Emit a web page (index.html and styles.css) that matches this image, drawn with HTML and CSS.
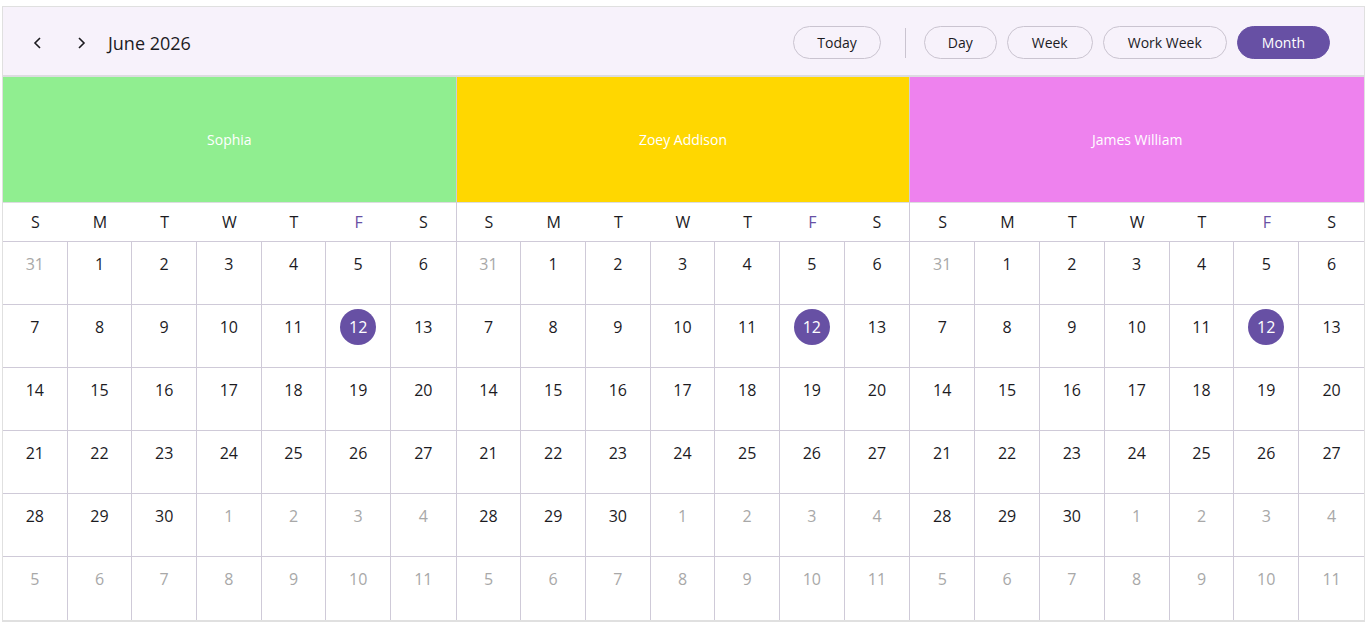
FILE: index.html
```html
<!DOCTYPE html>
<html lang="en">

<head>
    <meta charset="UTF-8">
    <title>Scheduler - Month</title>
    <link rel="stylesheet" href="styles.css">
</head>

<body>

    <div class="scheduler">
        <div class="toolbar">
            <div class="nav">
                <button class="arrow" title="Previous">
                    <svg width="14" height="14" viewBox="0 0 14 14"><path d="M9 2 L4 7 L9 12" fill="none" stroke="#1c1b1f" stroke-width="1.6" /></svg>
                </button>
                <button class="arrow" title="Next">
                    <svg width="14" height="14" viewBox="0 0 14 14"><path d="M5 2 L10 7 L5 12" fill="none" stroke="#1c1b1f" stroke-width="1.6" /></svg>
                </button>
                <span class="title">June 2026</span>
            </div>
            <div class="views">
                <button class="pill today">Today</button>
                <span class="divider"></span>
                <button class="pill day">Day</button>
                <button class="pill week">Week</button>
                <button class="pill workweek">Work Week</button>
                <button class="pill month active">Month</button>
            </div>
        </div>

        <div class="resources" id="resources">
        </div>
    </div>

    <script>
        const resources = [
            { name: "Sophia", color: "#90ee90" },
            { name: "Zoey Addison", color: "#ffd700" },
            { name: "James William", color: "#ee82ee" }
        ];
        const dayNames = ["S", "M", "T", "W", "T", "F", "S"];
        const container = document.querySelector("#resources");

        // June 2026 starts on a Monday, grid starts Sunday 31 May
        function buildDates() {
            let dates = [{ n: 31, other: true }];
            for (let i = 1; i <= 30; i++) {
                dates.push({ n: i, other: false, today: i === 12 });
            }
            for (let i = 1; dates.length < 42; i++) {
                dates.push({ n: i, other: true });
            }
            return dates;
        }

        const dates = buildDates();

        for (let r = 0; r < resources.length; r++) {
            let html = `<div class="resource">
                <div class="resource-head" style="background:${resources[r].color}">${resources[r].name}</div>
                <div class="day-names">`;
            for (let d = 0; d < 7; d++) {
                html += `<span class="${d === 5 ? 'fri' : ''}">${dayNames[d]}</span>`;
            }
            html += `</div><div class="cells">`;
            for (let i = 0; i < dates.length; i++) {
                let cls = "num";
                if (dates[i].other) cls += " other";
                if (dates[i].today) cls += " today";
                html += `<div class="cell"><span class="${cls}">${dates[i].n}</span></div>`;
            }
            html += `</div></div>`;
            container.innerHTML += html;
        }
    </script>

</body>

</html>
```

FILE: styles.css
```css
body {
    margin: 0;
    font-family: "Open Sans", "Noto Sans", sans-serif;
    color: #1c1b1f;
    background: #fff;
}

.scheduler {
    margin: 6px 2px 0 2px;
    border: 1px solid #e0e0e0;
    border-bottom: 2px solid #e0e0e0;
}

.toolbar {
    height: 70px;
    box-sizing: border-box;
    display: flex;
    justify-content: space-between;
    align-items: center;
    background: #f7f2fb;
    border-bottom: 2px solid #dcdce0;
    padding: 3px 34px 0 21px;
}

.nav {
    display: flex;
    align-items: center;
}

.arrow {
    width: 28px;
    height: 28px;
    margin-right: 15px;
    padding: 0;
    border: none;
    background: none;
    display: flex;
    align-items: center;
    justify-content: center;
    cursor: pointer;
}

.title {
    font-size: 18px;
    margin-left: -2px;
    margin-top: 1px;
}

.views {
    display: flex;
    align-items: center;
    gap: 10px;
}

.pill {
    height: 33px;
    padding: 0 23px;
    font-family: inherit;
    font-size: 14px;
    color: #1c1b1f;
    background: #f7f2fb;
    border: 1px solid #cac4d0;
    border-radius: 17px;
    cursor: pointer;
}

.pill.week,
.pill.workweek,
.pill.month {
    padding: 0 24px;
}

.pill.active {
    background: #6750a4;
    border-color: #6750a4;
    color: white;
}

.divider {
    width: 1px;
    height: 30px;
    background: #cac4d0;
    margin: 0 8px 0 14px;
}

.resources {
    display: grid;
    grid-template-columns: repeat(3, 1fr);
}

.resource {
    border-right: 1px solid #cfcad8;
}

.resource:last-child {
    border-right: none;
}

.resource-head {
    height: 125px;
    display: flex;
    align-items: center;
    justify-content: center;
    color: white;
    font-size: 14px;
    border-bottom: 1px solid #dcdce0;
}

.day-names {
    height: 38px;
    display: grid;
    grid-template-columns: repeat(7, 1fr);
    align-items: center;
    text-align: center;
    font-size: 16px;
    border-bottom: 1px solid #cfcad8;
}

.day-names .fri {
    color: #6750a4;
}

.cells {
    height: 378px;
    display: grid;
    grid-template-columns: repeat(7, 1fr);
    grid-template-rows: repeat(6, 1fr);
}

.cell {
    border-right: 1px solid #cfcad8;
    border-bottom: 1px solid #cfcad8;
    display: flex;
    justify-content: center;
    align-items: flex-start;
}

.cell:nth-child(7n) {
    border-right: none;
}

.cell:nth-last-child(-n+7) {
    border-bottom: none;
}

.num {
    margin-top: 4px;
    width: 36px;
    height: 36px;
    line-height: 36px;
    text-align: center;
    font-size: 16px;
    border-radius: 50%;
}

.num.other {
    color: #a8a8a8;
}

.num.today {
    background: #6750a4;
    color: white;
}
```
